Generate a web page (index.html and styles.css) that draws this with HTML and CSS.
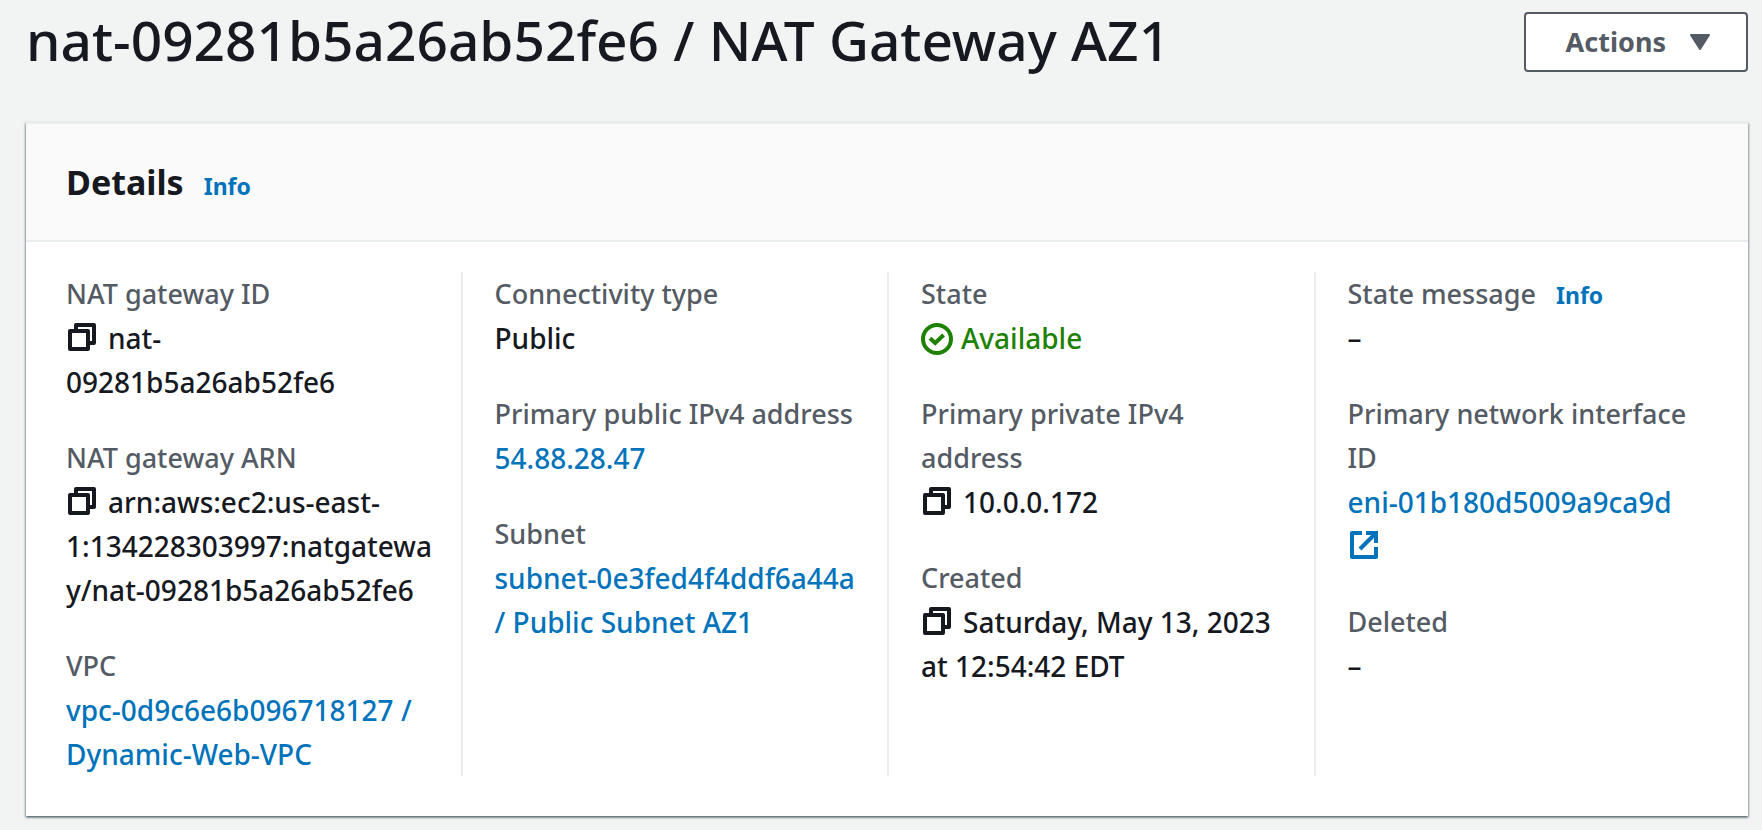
FILE: index.html
```html
<!DOCTYPE html>
<html lang="en">
<head>
<meta charset="utf-8">
<title>NAT gateway details</title>
<link rel="stylesheet" href="styles.css">
</head>
<body>
<svg class="sprite" aria-hidden="true">
  <symbol id="copy" viewBox="0 0 16 16">
    <path d="M2 5h9v9H2z M5 5V2h9v9h-3" fill="none" stroke="currentColor" stroke-width="2" stroke-linejoin="round"/>
  </symbol>
  <symbol id="check" viewBox="0 0 16 16">
    <circle cx="8" cy="8" r="7" fill="none" stroke="currentColor" stroke-width="2"/>
    <path d="M4.5 7.6l2.6 2.4 4.2-4" fill="none" stroke="currentColor" stroke-width="2"/>
  </symbol>
  <symbol id="external" viewBox="0 0 16 16">
    <path d="M7 2H2v12h12V9" fill="none" stroke="currentColor" stroke-width="2" stroke-linejoin="round"/>
    <path d="M9 2h5v5M14 2L6 10" fill="none" stroke="currentColor" stroke-width="2"/>
  </symbol>
</svg>
<main class="page">
  <header class="page-header">
    <h1 class="title">nat-09281b5a26ab52fe6 / NAT Gateway AZ1</h1>
    <button class="actions" type="button">Actions
      <svg class="caret" viewBox="0 0 20 16" aria-hidden="true"><path d="M1 1h18l-9 14z" fill="currentColor" stroke="currentColor" stroke-width="2" stroke-linejoin="round"/></svg>
    </button>
  </header>
  <section class="panel">
    <header class="panel-header">
      <h2 class="panel-title">Details</h2>
      <a class="info" href="#details-info">Info</a>
    </header>
    <div class="columns">
      <dl class="column">
        <div><dt>NAT gateway ID</dt><dd><button class="copy" type="button" aria-label="Copy NAT gateway ID"><svg class="icon"><use href="#copy"/></svg></button>nat-<br>09281b5a26ab52fe6</dd></div>
        <div><dt>NAT gateway ARN</dt><dd><button class="copy" type="button" aria-label="Copy NAT gateway ARN"><svg class="icon"><use href="#copy"/></svg></button>arn:aws:ec2:us-east-1:134228303997:natgateway/nat-09281b5a26ab52fe6</dd></div>
        <div><dt>VPC</dt><dd><a href="#vpc">vpc-0d9c6e6b096718127 / Dynamic-Web-VPC</a></dd></div>
      </dl>
      <dl class="column">
        <div><dt>Connectivity type</dt><dd>Public</dd></div>
        <div><dt>Primary public IPv4 address</dt><dd><a href="#ip">54.88.28.47</a></dd></div>
        <div><dt>Subnet</dt><dd><a href="#subnet">subnet-0e3fed4f4ddf6a44a / Public Subnet AZ1</a></dd></div>
      </dl>
      <dl class="column">
        <div><dt>State</dt><dd class="available"><svg class="icon status" aria-hidden="true"><use href="#check"/></svg>Available</dd></div>
        <div><dt>Primary private IPv4 address</dt><dd><button class="copy" type="button" aria-label="Copy private IPv4 address"><svg class="icon"><use href="#copy"/></svg></button>10.0.0.172</dd></div>
        <div><dt>Created</dt><dd><button class="copy" type="button" aria-label="Copy creation time"><svg class="icon"><use href="#copy"/></svg></button>Saturday, May 13, 2023 at 12:54:42 EDT</dd></div>
      </dl>
      <dl class="column">
        <div><dt>State message<a class="info" href="#state-info">Info</a></dt><dd>–</dd></div>
        <div><dt>Primary network interface ID</dt><dd><a href="#eni">eni-01b180d5009a9ca9d<br><svg class="icon" role="img" aria-label="Opens in a new tab"><use href="#external"/></svg></a></dd></div>
        <div><dt>Deleted</dt><dd>–</dd></div>
      </dl>
    </div>
  </section>
</main>
</body>
</html>
```
FILE: styles.css
```css
* {
  box-sizing: border-box;
}

body {
  margin: 0;
  background: #f2f3f3;
  color: #16191f;
  font: 500 27px/44px "Noto Sans", sans-serif;
}

a {
  color: #0073bb;
  text-decoration: none;
}

.sprite {
  display: none;
}

.page {
  padding: 8px 14px 14px 26px;
}

.page-header {
  display: flex;
  justify-content: space-between;
  align-items: flex-end;
  margin-bottom: 50px;
}

.title {
  margin: 0;
  font-size: 55px;
  line-height: 64px;
  font-weight: 500;
}

.actions {
  display: flex;
  align-items: center;
  gap: 24px;
  height: 60px;
  padding: 0 36px 0 40px;
  border: 2px solid #545b64;
  border-radius: 4px;
  background: #fff;
  color: #545b64;
  font: inherit;
  font-weight: 700;
}

.caret {
  width: 20px;
  height: 16px;
}

.panel {
  border-top: 2px solid #eaeded;
  background: #fff;
  box-shadow: 0 2px 2px rgba(0, 28, 36, 0.3), 1px 1px 2px rgba(0, 28, 36, 0.3), -1px 1px 2px rgba(0, 28, 36, 0.3);
}

.panel-header {
  display: flex;
  align-items: baseline;
  padding: 36px 40px;
  border-bottom: 2px solid #eaeded;
  background: #fafafa;
}

.panel-title {
  margin: 0;
  font-size: 34px;
  line-height: 44px;
  font-weight: 700;
}

.info {
  margin-left: 20px;
  font-size: 23px;
  font-weight: 700;
  line-height: 32px;
}

.columns {
  display: grid;
  grid-template-columns: repeat(4, minmax(0, 1fr));
  padding: 30px 8px 40px;
}

.column {
  display: flex;
  flex-direction: column;
  gap: 32px;
  margin: 0;
  padding: 0 28px 0 32px;
  overflow-wrap: anywhere;
}

.column + .column {
  border-left: 2px solid #eaeded;
}

dt {
  color: #545b64;
}

dd {
  margin: 0;
  font-size: 28px;
}

.copy {
  padding: 0;
  margin: 0 10px 0 0;
  border: 0;
  background: none;
  color: inherit;
  font: inherit;
  line-height: 32px;
}

.icon {
  width: 32px;
  height: 32px;
  vertical-align: -4px;
}

.status {
  margin-right: 8px;
  vertical-align: -6px;
}

.available {
  color: #1d8102;
}
```
